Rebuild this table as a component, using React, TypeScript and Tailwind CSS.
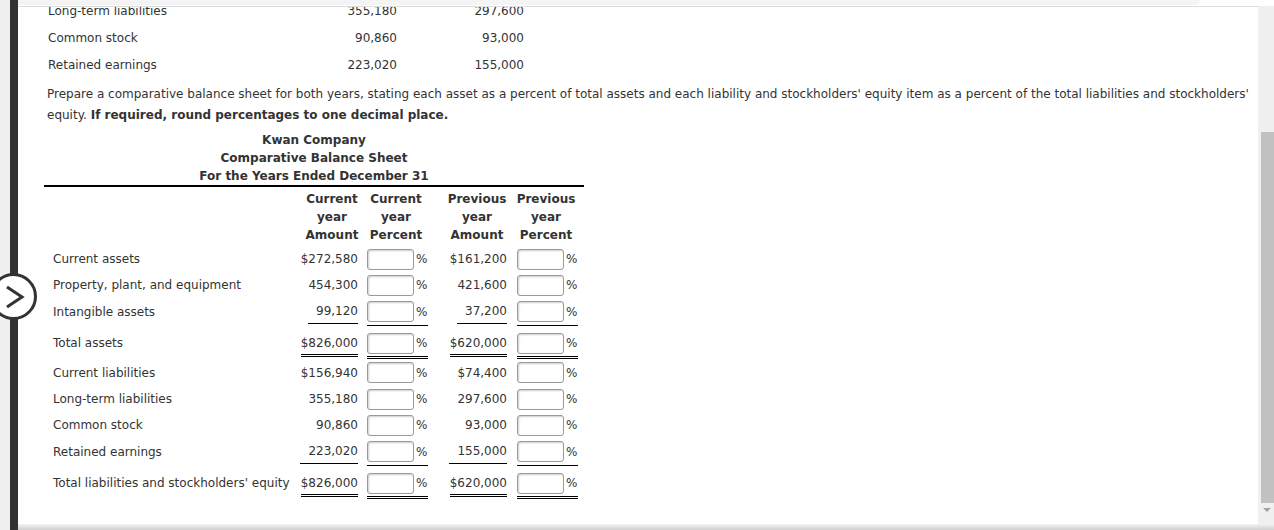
import React from 'react';

type Kind = 'plain' | 'under' | 'total';

type Line = {
  label: string;
  cur: string;
  prev: string;
  kind: Kind;
  h: string;
};

const topRows = [
  { label: 'Long-term liabilities', cur: '355,180', prev: '297,600' },
  { label: 'Common stock', cur: '90,860', prev: '93,000' },
  { label: 'Retained earnings', cur: '223,020', prev: '155,000' },
];

const lines: Line[] = [
  { label: 'Current assets', cur: '$272,580', prev: '$161,200', kind: 'plain', h: 'h-[26px]' },
  { label: 'Property, plant, and equipment', cur: '454,300', prev: '421,600', kind: 'plain', h: 'h-[26px]' },
  { label: 'Intangible assets', cur: '99,120', prev: '37,200', kind: 'under', h: 'h-[28px]' },
  { label: 'Total assets', cur: '$826,000', prev: '$620,000', kind: 'total', h: 'h-[33px]' },
  { label: 'Current liabilities', cur: '$156,940', prev: '$74,400', kind: 'plain', h: 'h-[27px]' },
  { label: 'Long-term liabilities', cur: '355,180', prev: '297,600', kind: 'plain', h: 'h-[26px]' },
  { label: 'Common stock', cur: '90,860', prev: '93,000', kind: 'plain', h: 'h-[26px]' },
  { label: 'Retained earnings', cur: '223,020', prev: '155,000', kind: 'under', h: 'h-[28px]' },
  { label: "Total liabilities and stockholders' equity", cur: '$826,000', prev: '$620,000', kind: 'total', h: 'h-[33px]' },
];

const Amount = ({ value, kind, width }: { value: string; kind: Kind; width: string }) => {
  let inner = 'h-[26px] flex items-center';
  if (kind === 'under') inner = 'h-[26px] flex items-center pl-2 border-b border-black';
  if (kind === 'total') inner = 'h-[31px] flex items-center pt-[6px] border-b-[3px] border-double border-black';
  return (
    <div className={`${width} flex justify-end`}>
      <span className={inner}>{value}</span>
    </div>
  );
};

const Percent = ({ kind, ml }: { kind: Kind; ml: string }) => {
  let box = 'h-[26px]';
  if (kind === 'under') box = 'h-[28px] border-b border-black';
  if (kind === 'total') box = 'h-[33px] pt-[4px] border-b-[3px] border-double border-black';
  return (
    <div className={`${ml} w-[61px] flex items-center ${box}`}>
      <input
        type="text"
        className="w-[47px] h-[21px] bg-white border border-[#9a9a9a] rounded-[3px] shadow-[inset_1px_1px_2px_rgba(0,0,0,0.2)] outline-none"
      />
      <span className="ml-[2px]">%</span>
    </div>
  );
};

const Row = ({ line }: { line: Line }) => (
  <div className={`flex ${line.kind === 'plain' ? 'items-center' : 'items-start'} ${line.h}`}>
    <div className="w-[252px] pl-[9px] self-stretch flex items-center">{line.label}</div>
    <Amount value={line.cur} kind={line.kind} width="w-[62px]" />
    <Percent kind={line.kind} ml="ml-[9px]" />
    <Amount value={line.prev} kind={line.kind} width="w-[79px]" />
    <Percent kind={line.kind} ml="ml-[10px]" />
  </div>
);

const App = () => {
  return (
    <div className="relative flex w-[1274px] h-[530px] overflow-hidden bg-white text-[12px] text-[#333] font-['DejaVu_Sans',sans-serif]">
      <div className="w-[10px] bg-[#f0f0f0]" />
      <div className="w-[8px] bg-[#333]" />

      <div className="flex-1 flex flex-col">
        <div className="flex-1 flex min-h-0">
          <div className="relative flex-1 overflow-hidden">
            <div className="absolute top-0 left-0 right-0 h-[7px] bg-white border-b border-[#dcdcdc] z-10">
              <div className="w-[1182px] h-[5px] bg-[#f4f4f4] rounded-br-[10px]" />
            </div>

            <div className="mt-[-3px]">
              {topRows.map((r) => (
                <div key={r.label} className="flex items-center h-[27px] pl-[30px]">
                  <div className="w-[250px]">{r.label}</div>
                  <div className="w-[99px] text-right">{r.cur}</div>
                  <div className="w-[127px] text-right">{r.prev}</div>
                </div>
              ))}
            </div>

            <p className="mt-[6px] pl-[29px] leading-[21px]">
              Prepare a comparative balance sheet for both years, stating each asset as a percent of total assets and each liability and stockholders' equity item as a percent of the total liabilities and stockholders' equity. <b>If required, round percentages to one decimal place.</b>
            </p>

            <div className="ml-[26px] mt-[5px] w-[540px]">
              <div className="text-center font-bold leading-[18px] border-b-2 border-black">
                <div>Kwan Company</div>
                <div>Comparative Balance Sheet</div>
                <div>For the Years Ended December 31</div>
              </div>

              <div className="flex mt-[3px] pb-[2px] font-bold leading-[18px] text-center">
                <div className="w-[258px]" />
                <div className="w-[60px]">Current<br />year<br />Amount</div>
                <div className="ml-[2px] w-[64px]">Current<br />year<br />Percent</div>
                <div className="ml-[19px] w-[60px]">Previous<br />year<br />Amount</div>
                <div className="ml-[9px] w-[60px]">Previous<br />year<br />Percent</div>
              </div>

              {lines.map((l) => (
                <Row key={l.label + l.cur} line={l} />
              ))}
            </div>
          </div>

          <div className="w-[16px] flex flex-col">
            <div className="h-[6px] bg-white" />
            <div className="flex-1 bg-[#f0f0f0] flex flex-col">
              <div className="mt-[126px] ml-[3px] w-[13px] h-[371px] bg-[#c1c1c1]" />
              <div className="mt-[5px] ml-[5px] w-0 h-0 border-l-[4px] border-r-[4px] border-t-[4px] border-l-transparent border-r-transparent border-t-[#a3a3a3]" />
            </div>
          </div>
        </div>
        <div className="h-[6px] bg-gradient-to-b from-[#f3f3f3] to-[#cfcfcf]" />
      </div>

      <div className="absolute left-[-10px] top-[273px] w-[47px] h-[47px] rounded-full border-[3px] border-[#333] bg-white">
        <svg width="41" height="41" viewBox="0 0 41 41">
          <polyline points="14,11 29,21 14,31" fill="none" stroke="#333" strokeWidth="3" />
        </svg>
      </div>
    </div>
  );
};

export default App;
